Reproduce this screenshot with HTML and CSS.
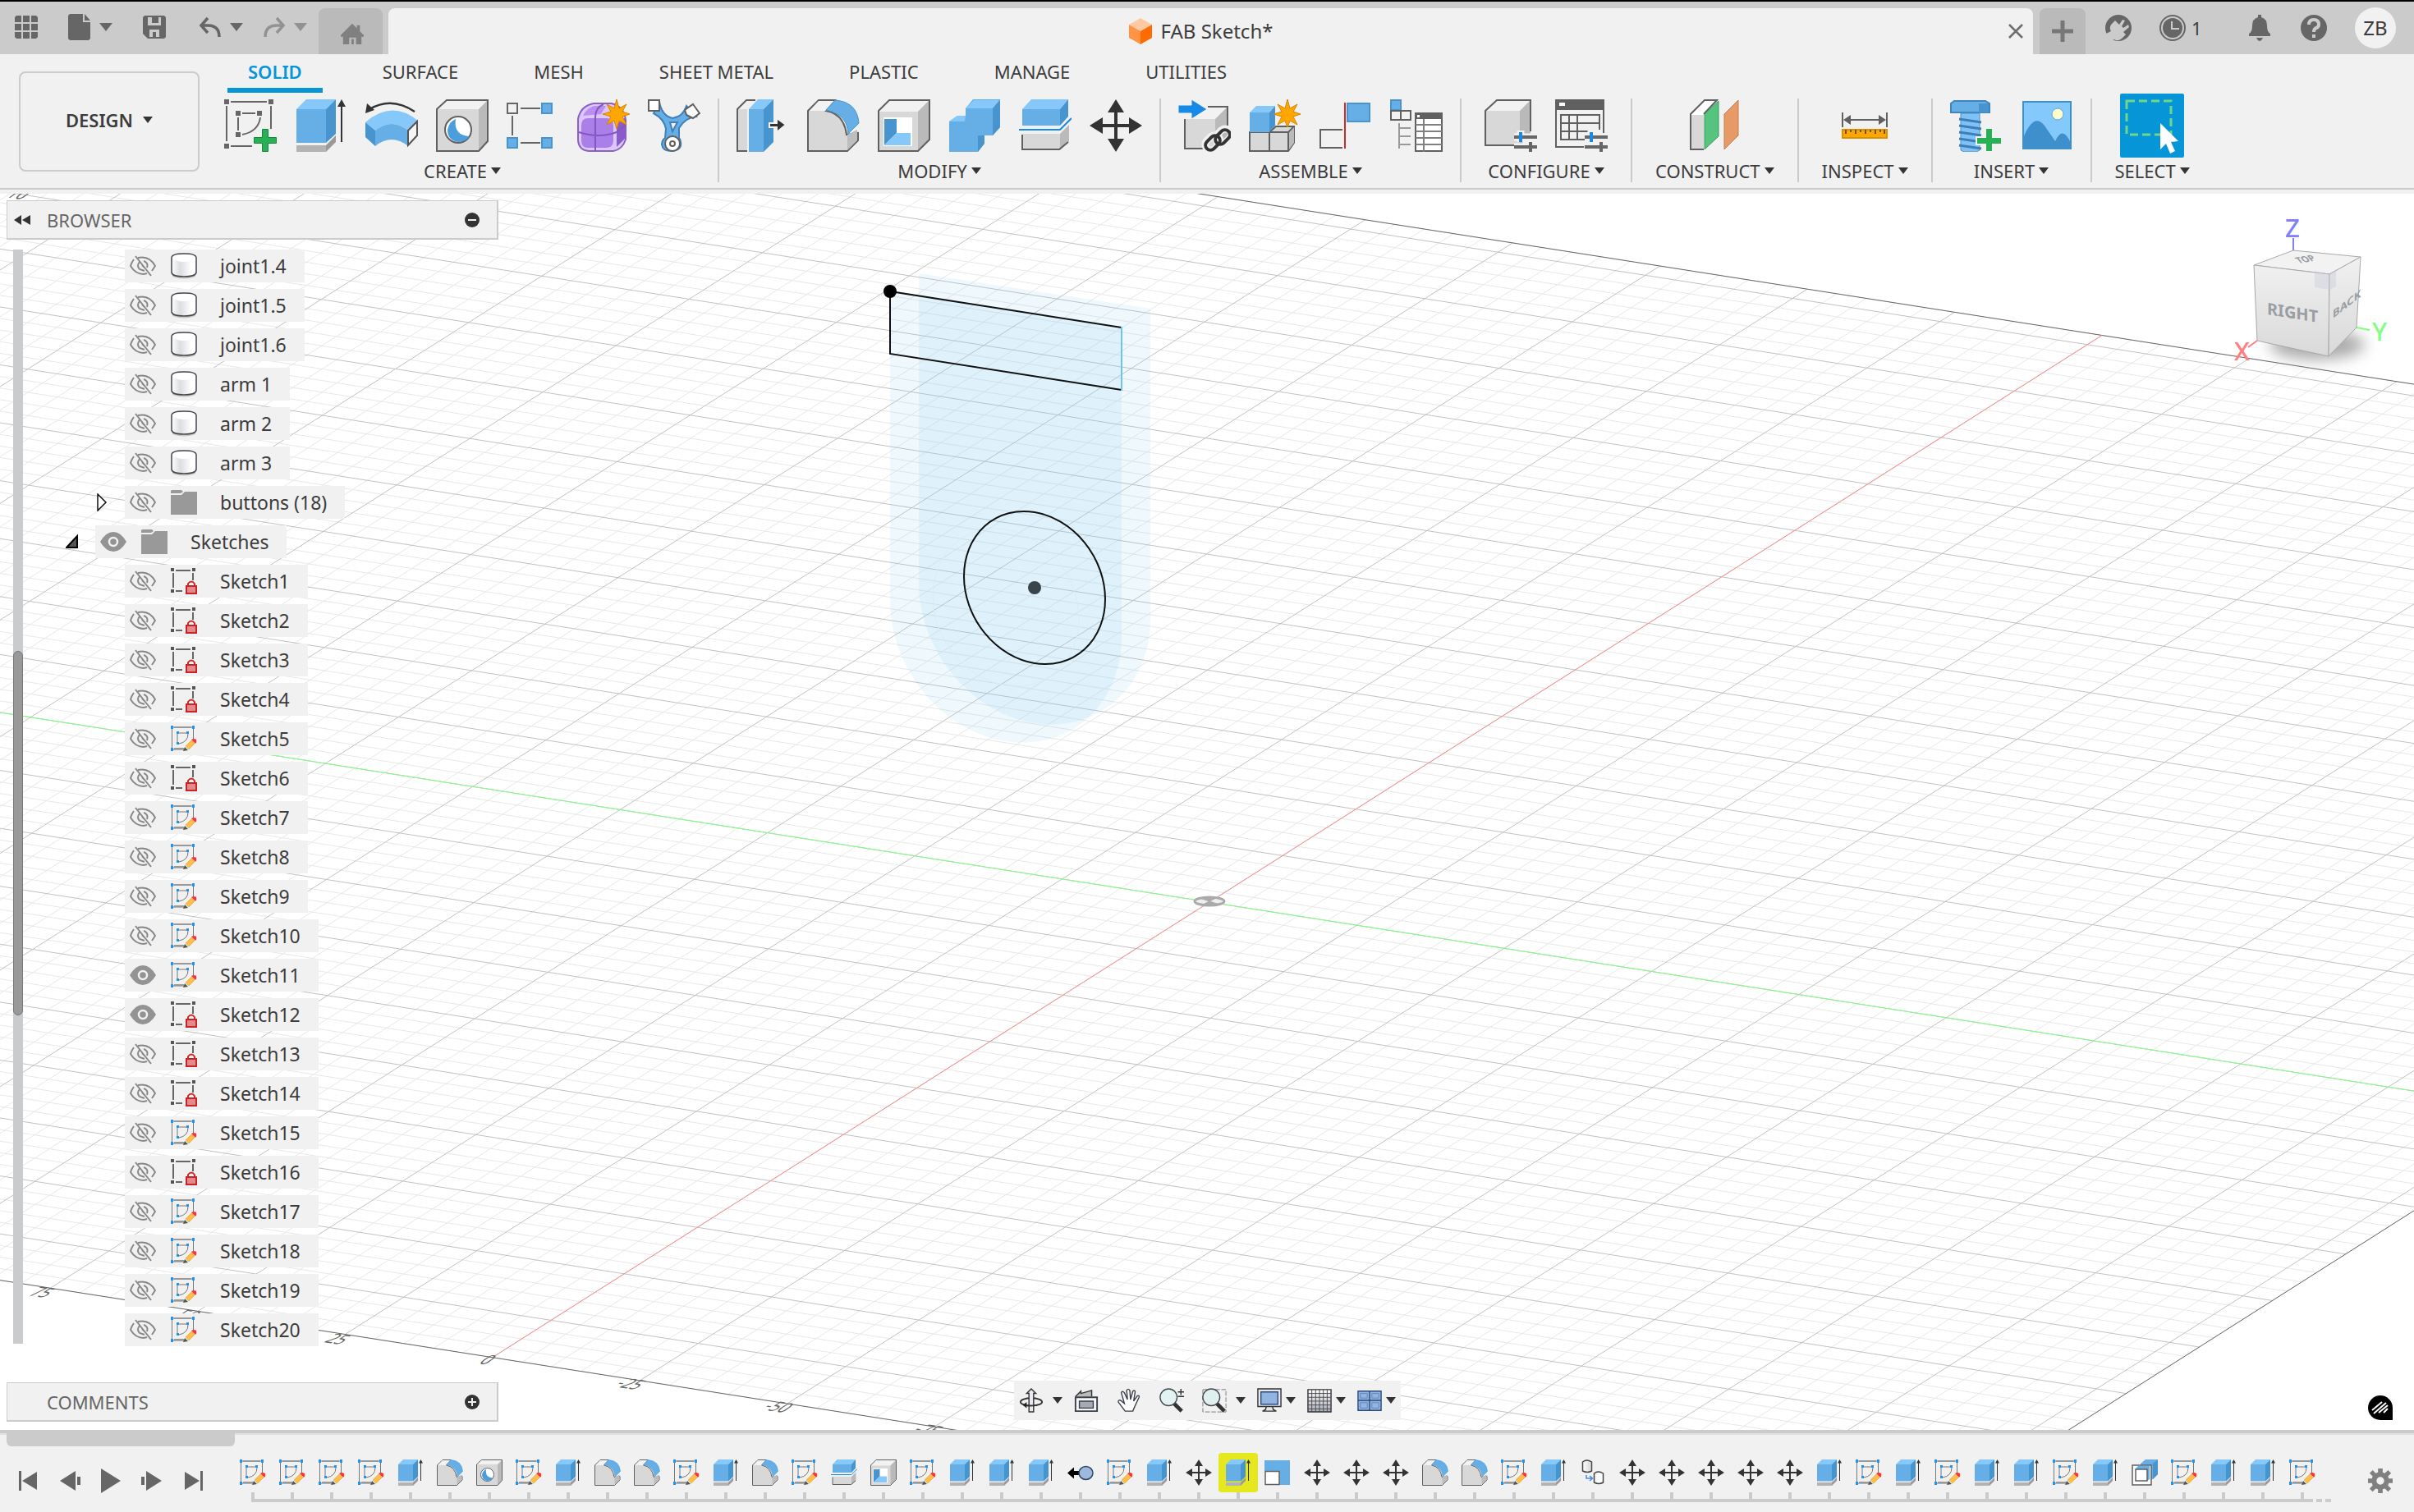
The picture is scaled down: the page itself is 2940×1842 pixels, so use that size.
FILE: index.html
```html
<!DOCTYPE html>
<html lang="en">
  <head>
    <meta charset="utf-8">
    <title>FAB Sketch*</title>
    <link rel="stylesheet" href="styles.css">
  </head>
  <body>
    <svg class="sprite" aria-hidden="true">
      <defs>
        <linearGradient id="cyl" x1="0" x2="1" y1="0" y2="0">
          <stop offset="0" stop-color="#fff" /><stop offset=".35" stop-color="#dcdde0" /><stop offset=".8" stop-color="#fff" />
        </linearGradient>
        <linearGradient id="steel" x1="0" x2="0" y1="0" y2="1">
          <stop offset="0" stop-color="#fff" /><stop offset="1" stop-color="#a9adbb" />
        </linearGradient>
        <linearGradient id="cubeSide" x1="0" x2="0" y1="0" y2="1">
          <stop offset="0" stop-color="#f0f0f0" /><stop offset="1" stop-color="#d9d9d9" />
        </linearGradient>
        <filter id="soft" x="-50%" y="-50%" width="200%" height="200%"><feGaussianBlur stdDeviation="9" /></filter>
      </defs>

      <!-- title bar -->
      <symbol id="apps" viewBox="0 0 28 28"><path fill="#666" d="M2 0h6v8H0V2zM10 0h8v8h-8zM20 0h6l2 2v6h-8zM0 10h8v8H0zM10 10h8v8h-8zM20 10h8v8h-8zM0 20h8v8H2l-2-2zM10 20h8v8h-8zM20 20h8v6l-2 2h-6z" /></symbol>
      <symbol id="file" viewBox="0 0 28 32"><path fill="#666" d="M2 0h16v10h9v20l-2 2H2l-2-2V2zM20 0l7 8h-7z" /></symbol>
      <symbol id="save" viewBox="0 0 28 28"><path fill="#666" fill-rule="evenodd" d="M2 0h24l2 2v24l-2 2H6l-6-6V2zM6 2v10h16V2h-3v7h-8V2zM8 17v9h4v-6h4v6h4v-9z" /></symbol>
      <symbol id="undo" viewBox="0 0 28 26"><path fill="none" stroke="#666" stroke-width="3.5" d="M11 2L3 11l8 9M3 11h8q14 0 14 14" /></symbol>
      <symbol id="redo" viewBox="0 0 28 26"><path fill="none" stroke="#929292" stroke-width="3.5" d="M17 2l8 9-8 9M25 11h-8Q3 11 3 25" /></symbol>
      <symbol id="home" viewBox="0 0 30 28"><path fill="#808080" fill-rule="evenodd" d="M15 1l6 6V3h4v8l5 5v2h-3v10h-7v-9h-9v9H3V18H0v-2zM14 21h3v7h-3z" /></symbol>
      <symbol id="doc" viewBox="0 0 28 32"><path fill="#ffc9a3" d="M14 0l14 8-14 8L0 8z" /><path fill="#ff9445" d="M0 8l14 8v16L0 24z" /><path fill="#ff6b00" d="M28 8l-14 8v16l14-8z" /></symbol>
      <symbol id="close" viewBox="0 0 18 18"><path stroke="#6e6e6e" stroke-width="2.500" d="M1 1l16 16M17 1L1 17" /></symbol>
      <symbol id="plus" viewBox="0 0 26 26"><path stroke="#777" stroke-width="5" d="M13 0v26M0 13h26" /></symbol>
      <symbol id="plug" viewBox="0 0 32 32">
        <circle cx="16" cy="16" r="16" fill="#666" />
        <path fill="#cbcbcb" d="M1 23l6-3q-3-5 1-9l4-4 5 5 4-6 3 1-4 7 2 2 6-4 1 3-7 6 3 3-5 5q-5 4-9 1l-7 3z" />
      </symbol>
      <symbol id="clock" viewBox="0 0 32 32"><circle cx="16" cy="16" r="15" fill="none" stroke="#666" stroke-width="2" /><circle cx="16" cy="16" r="12" fill="#666" /><path d="M15 8v9h9" fill="none" stroke="#ccc" stroke-width="2" /></symbol>
      <symbol id="bell" viewBox="0 0 32 32"><path fill="#666" d="M14 0h4v3q7 2 7 10 0 8 4 10v3H3v-3q4-2 4-10 0-8 7-10zM12 28h8q-4 8-8 0z" /></symbol>
      <symbol id="help" viewBox="0 0 32 32"><circle cx="16" cy="16" r="16" fill="#666" /><path fill="none" stroke="#ccc" stroke-width="4" d="M10 12q0-6 6-6t6 6q0 3-3 4-3 1-3 5M16 24v4" /></symbol>

      <!-- create -->
      <symbol id="sketch-new" viewBox="0 0 64 64">
        <path fill="#666" d="M0 0h6v6H0zM54 0h6v6h-6zM0 54h6v6H0zM14 14h6v6h-6zM40 14h6v6h-6zM14 40h6v6h-6z" />
        <path fill="none" stroke="#666" stroke-width="2" d="M8 3h44M3 8v43M57 8v28M8 57h26M22 17h16M17 22v16M44 22q-2 17-22 21" />
        <path fill="#28b057" stroke="#128a3b" d="M46.500 36.500h7v10h10v7h-10v10h-7v-10h-10v-7h10z" />
      </symbol>
      <symbol id="extrude" viewBox="0 0 64 64">
        <path fill="#b3b3b3" d="M2 56h36v8H2z" /><path fill="#999" d="M38 56l12-12v8L38 64z" />
        <path fill="#66afe6" d="M2 12h36v41H2z" /><path fill="#87c8fb" d="M2 12L14 0h36L38 12z" /><path fill="#4794ce" d="M38 12L50 0v42L38 53z" />
        <path fill="#333" d="M57 0l5 9h-4v43h-2V9h-4z" />
      </symbol>
      <symbol id="revolve" viewBox="0 0 64 64">
        <path fill="#87c8fb" d="M0 28q32-28 64-2L52 38q-20-16-40 0z" /><path fill="#66afe6" d="M12 38q20-16 40 0v19q-20-16-40 0z" /><path fill="#4794ce" d="M0 28l12 10v19L0 46z" />
        <path fill="#f5f5f5" stroke="#555" stroke-width="2" d="M52 38l11-11v17L52 56z" />
        <path fill="none" stroke="#333" stroke-width="2.500" d="M5 12Q32-4 60 15" /><path fill="#333" d="M0 17L2 5l9 8z" />
      </symbol>
      <symbol id="hole" viewBox="0 0 64 64">
        <path fill="#d8d8d8" d="M1 12h51v51H1z" /><path fill="#f2f2f2" d="M1 12L13 1h50L52 12z" /><path fill="#bababa" d="M52 12L63 1v50L52 63z" />
        <path fill="none" stroke="#606060" stroke-width="2" d="M1 12L13 1h50v50L52 63H1z" />
        <circle cx="27" cy="37" r="16" fill="#fff" stroke="#606060" stroke-width="2" /><path fill="#4a9edc" d="M24 24q-3 20 17 21-5 7-14 7-13-2-13-15 2-10 10-13z" />
      </symbol>
      <symbol id="pattern" viewBox="0 0 64 64">
        <path fill="none" stroke="#666" stroke-width="2" d="M17 11h24M7 20v24M17 53h24M1 5h12v12H1z" />
        <path fill="#66afe6" stroke="#4794ce" stroke-width="2" d="M43 5h12v12H43zM1 47h12v12H1zM43 47h12v12H43z" />
      </symbol>
      <symbol id="form" viewBox="0 0 64 64">
        <path fill="#dcc7fa" stroke="#8b61c4" stroke-width="2" d="M1 24Q4 8 20 5h22q15 4 17 20v24Q55 61 44 63H14Q2 62 1 50z" />
        <path fill="#ab7fe8" d="M5 32q0-9 8-9h22q9 0 9 9v18q0 9-9 9H13q-8 0-8-9z" /><path fill="#8a5bca" d="M48 30l11-8v25L48 58z" /><path fill="#bb8ef2" d="M7 20q5-10 14-12h14l-6 10z" />
        <path fill="none" stroke="#8456be" stroke-width="2" d="M22 63V22q0-12 10-16M2 40q25 8 46 0l11-9" />
        <path fill="#ffa700" stroke="#d98500" d="M48 0l3 11 9-5-5 9 9 3-9 3 5 10-9-5-3 10-3-10-9 5 5-10-10-3 10-3-5-9 9 5z" />
      </symbol>
      <symbol id="derive" viewBox="0 0 64 64">
        <path fill="#66afe6" stroke="#4180b8" stroke-width="2" fill-rule="evenodd" d="M14 3q3 17 16 20 13-2 17-15l12 13q-13 1-21 14v12q3 3 2 10-2 6-12 6t-11-8q0-5 4-8l1-11Q20 24 7 17zM27 28l3 11 6-11z" />
        <path fill="#fff" stroke="#606060" stroke-width="2" d="M1 1h13v13H1zM55 6l8 11-8 6-8-4-2-6z" /><circle cx="30" cy="54" r="9" fill="#fff" stroke="#606060" stroke-width="2" /><circle cx="30" cy="54" r="3" fill="none" stroke="#606060" stroke-width="2" />
      </symbol>

      <!-- modify -->
      <symbol id="press" viewBox="0 0 64 64">
        <path fill="#d8d8d8" d="M1 12h12v51H1z" /><path fill="none" stroke="#606060" stroke-width="2" d="M23 1H12L1 12v51h12" />
        <path fill="#66afe6" d="M15 12h18v52H15z" /><path fill="#87c8fb" d="M15 12L26 0h19L33 12z" /><path fill="#4794ce" d="M33 12L45 0v52L33 64z" />
        <path fill="#333" stroke="#f1f1f1" stroke-width="2" d="M40 29h9v-6l11 8-11 9v-6h-9z" />
      </symbol>
      <symbol id="fillet" viewBox="0 0 64 64">
        <path fill="#d8d8d8" stroke="#606060" stroke-width="2" d="M1 14L14 1h20L23 14q22 4 25 29l14-2v9L49 63H1z" />
        <path fill="#f2f2f2" d="M3 14L14 2h19L22 14z" /><path fill="#bdbdbd" d="M49 43l12-6v13L49 62z" />
        <path fill="#66afe6" stroke="#4794ce" d="M23 13L34 1q27 2 29 28L50 42Q49 18 23 13z" />
      </symbol>
      <symbol id="shell" viewBox="0 0 64 64">
        <path fill="#d8d8d8" d="M1 14L14 1h49v48L49 63H1z" /><path fill="#f2f2f2" d="M1 15L14 1h49L49 15z" /><path fill="#bababa" d="M49 15L63 1v48L49 63z" />
        <path fill="none" stroke="#606060" stroke-width="2" d="M1 14L14 1h49v48L49 63H1z" /><path fill="#fff" d="M7 22h35v35H7z" /><path fill="#4794ce" d="M8 24h15v17L8 56z" /><path fill="#87c8fb" d="M23 41h17v15H8z" />
      </symbol>
      <symbol id="combine" viewBox="0 0 64 64">
        <path fill="#66afe6" d="M1 27l10-7h10V11L30 0h33v34l-9 10H43v10L36 64H1z" /><path fill="#87c8fb" d="M21 11L31 1h31L54 11zM1 27l10-7h10l-1 7z" /><path fill="#4794ce" d="M54 11l9-10v33l-9 10zM36 64V44h8v10z" />
      </symbol>
      <symbol id="split" viewBox="0 0 64 64">
        <path fill="#d8d8d8" d="M4 42h46v20H4z" /><path fill="#bababa" d="M50 42l11-11v20L50 62z" /><path fill="none" stroke="#606060" stroke-width="2" d="M4 43v18h45l11-9" />
        <path fill="#66afe6" d="M4 12h46v20H4z" /><path fill="#87c8fb" d="M4 12L15 0h45L50 12z" /><path fill="#4794ce" d="M50 12L60 0v21L50 32z" /><path fill="none" stroke="#1789e6" stroke-width="2" d="M0 37h50l14-14" />
      </symbol>
      <symbol id="move" viewBox="0 0 64 64"><path fill="#333" d="M32 0l10 16h-8v14h14v-8l16 10-16 10v-8H34v14h8L32 64 22 48h8V34H16v8L0 32l16-10v8h14V16h-8z" /></symbol>

      <!-- assemble -->
      <symbol id="insert-link" viewBox="0 0 64 64">
        <path fill="#d8d8d8" d="M8 24h37v36H8z" /><path fill="#f2f2f2" d="M8 24L24 9h36L45 24z" /><path fill="#bababa" d="M45 24L60 9v36L45 60z" /><path fill="none" stroke="#606060" stroke-width="2" d="M8 24v36h30M36 9h24v34" />
        <path fill="#1789e6" stroke="#f1f1f1" d="M0 7h16V0l19 12-19 12v-7H0z" />
        <g fill="none" stroke="#f1f1f1" stroke-width="9"><rect x="-7" y="-10" width="14" height="20" rx="7" transform="translate(42 53) rotate(45)" /><rect x="-7" y="-10" width="14" height="20" rx="7" transform="translate(55 45) rotate(45)" /></g>
        <g fill="none" stroke="#333" stroke-width="4"><rect x="-6" y="-10" width="12" height="20" rx="6" transform="translate(42 53) rotate(45)" /><rect x="-6" y="-10" width="12" height="20" rx="6" transform="translate(54 46) rotate(45)" /></g>
      </symbol>
      <symbol id="component" viewBox="0 0 64 64">
        <path fill="#d8d8d8" stroke="#606060" stroke-width="2" d="M1 40h24l8-7h22v20L48 63H1zM25 40v23M25 40h23v23M48 40l7-7" /><path fill="#bababa" d="M49 41l6-7v19l-6 8z" />
        <path fill="#66afe6" d="M1 16h24v24H1z" /><path fill="#87c8fb" d="M1 16l8-8h23l-7 8z" /><path fill="#4794ce" d="M25 16l7-8v24l-7 8z" />
        <path fill="#ffa700" stroke="#d98500" d="M47 0l3 11 9-5-5 9 9 3-9 3 5 10-9-5-3 8-3-8-9 5 5-10-10-3 10-3-5-9 9 5z" />
      </symbol>
      <symbol id="joint" viewBox="0 0 64 64"><path fill="none" stroke="#606060" stroke-width="2" d="M28 37H1v22h27" /><path stroke="#c92a2a" stroke-width="2" d="M31 4v56" /><path fill="#66afe6" stroke="#4794ce" stroke-width="2" d="M34 5h27v22H34z" /></symbol>
      <symbol id="parts" viewBox="0 0 64 64">
        <path fill="#66afe6" stroke="#4794ce" stroke-width="2" d="M1 1h12v12H1z" /><path fill="none" stroke="#606060" stroke-width="2" d="M1 14h24v11H1zM13 14v11" /><path fill="none" stroke="#999" stroke-width="2" d="M11 29v31M11 35h14M11 45h14M11 55h14" />
        <path fill="#fff" stroke="#606060" stroke-width="2" d="M31 17h32v46H31z" /><path fill="#606060" d="M31 16h32v8H31z" /><path stroke="#808080" stroke-width="2" d="M31 31h32M31 39h32M31 47h32M31 55h32M41 24v40" /><path fill="#fff" d="M33 19h3v3h-3z" />
      </symbol>

      <!-- configure, construct, inspect, insert, select -->
      <symbol id="config" viewBox="0 0 64 64">
        <path fill="#d8d8d8" d="M1 14h42v42H1z" /><path fill="#f2f2f2" d="M1 14L15 1h41L43 14z" /><path fill="#bababa" d="M43 14L56 1v42L43 56z" /><path fill="none" stroke="#606060" stroke-width="2" d="M36 56H1V14L15 1h41v38" />
        <path stroke="#f1f1f1" stroke-width="9" d="M36 46h28M36 58h28M44 38v14" /><path stroke="#666" stroke-width="4" d="M36 46h28M36 58h28M56 52v12" /><path stroke="#1789e6" stroke-width="4" d="M44 40v12" />
      </symbol>
      <symbol id="config-table" viewBox="0 0 64 64">
        <path fill="none" stroke="#606060" stroke-width="2" d="M1 1h58v40M1 1v57h34" /><path fill="#606060" d="M0 0h60v13H0z" /><path fill="#fff" d="M5 4h7v4H5z" /><path fill="none" stroke="#606060" stroke-width="2" d="M38 49H7V19h47v18M7 29h47M7 39h40M17 19v30M27 19v30" />
        <path stroke="#f1f1f1" stroke-width="9" d="M36 46h28M36 58h28M44 38v14" /><path stroke="#666" stroke-width="4" d="M36 46h28M36 58h28M56 52v12" /><path stroke="#1789e6" stroke-width="4" d="M44 40v12" />
      </symbol>
      <symbol id="plane" viewBox="0 0 64 64">
        <path fill="#fff" stroke="#606060" stroke-width="2" d="M19 61H3V18L20 1h15L19 18" /><path fill="#d8d8d8" d="M4 19h15v41H4z" />
        <path fill="#56c47e" stroke="#3a9d5e" d="M20 18L37 2v43L20 61z" /><path fill="#e79a66" stroke="#c87c48" d="M44 18L61 1v43L44 61z" />
      </symbol>
      <symbol id="measure" viewBox="0 0 64 64"><path stroke="#606060" stroke-width="2" d="M5 16v18M59 16v18M10 25h44" /><path fill="#606060" d="M6 25l9-6v12zM58 25l-9-6v12z" /><path fill="#ffa700" stroke="#dc9000" stroke-width="2" d="M5 37h54v10H5z" /><path stroke="#705000" stroke-width="2" d="M9 37v5M15 37v3M21 37v5M27 37v3M33 37v5M39 37v3M45 37v5M51 37v3M56 37v5" /></symbol>
      <symbol id="bolt" viewBox="0 0 64 64">
        <path fill="#66afe6" stroke="#3f86bf" stroke-width="2" d="M1 5l4-3h38l5 3v11H1z" /><path fill="#4794ce" d="M35 5h12v11H35z" /><path fill="#7fc2f7" stroke="#4a90c9" d="M13 17h23v45l-4 2H17l-4-2z" /><path stroke="#3f7fb5" stroke-width="3" d="M11 24l27 4M11 32l27 4M11 40l27 4M11 48l27 4M11 56l27 4" />
        <path fill="#28b057" stroke="#f1f1f1" stroke-width="2" d="M43 35h9v11h11v9H52v9h-9v-9H32v-9h11z" />
      </symbol>
      <symbol id="image" viewBox="0 0 64 64"><path fill="#84c9fb" stroke="#3e90cc" stroke-width="2" d="M3 3h58v57H3z" /><path fill="#3e90cc" d="M3 47q14-34 28-12l11 16q9-20 19 2v7H3z" /><circle cx="45" cy="18" r="7" fill="#fdfdce" stroke="#5fa5d8" /></symbol>
      <symbol id="select" viewBox="0 0 78 78"><path fill="none" stroke="#6fd68a" stroke-width="3" stroke-dasharray="10 5" d="M8 9h54v41H8z" /><path fill="#fff" d="M49 36l22 22-9 1 5 11-6 3-5-12-7 7z" /></symbol>

      <!-- tree -->
      <symbol id="eye-off" viewBox="0 0 32 26"><path fill="none" stroke="#888" stroke-width="2" d="M5 5Q2 9 1 13q6 10 16 10l4-1M10 3q14-3 21 10l-4 6M12 8q-4 5 0 9l6 2M17 7q6 2 4 8M15 12l3 3M7 1l19 24" /></symbol>
      <symbol id="eye" viewBox="0 0 32 26"><path fill="#939393" d="M0 13Q7 1 16 1t16 12q-7 12-16 12T0 13z" /><circle cx="16" cy="13" r="5" fill="#939393" stroke="#f1f1f1" stroke-width="2.500" /></symbol>
      <symbol id="body" viewBox="0 0 32 32"><path fill="#888" opacity=".4" d="M2 26q14 8 28 0v3q-14 5-28 0z" /><path fill="url(#cyl)" stroke="#44474d" stroke-width="1.500" d="M1 6q0-5 15-5t15 5v18q-1 5-15 5T1 24z" /><path fill="#fff" d="M2 6q2-4 14-4t14 4q-4 5-14 5T2 6z" /></symbol>
      <symbol id="folder" viewBox="0 0 32 32"><path fill="#999" d="M0 2l1-1h12l2 2-3 2H0zM0 7h13l4-4h15v28H0z" /></symbol>
      <symbol id="sk-lock" viewBox="0 0 32 32">
        <path fill="#555" d="M0 0h4v4H0zM26 0h4v4h-4zM0 26h4v4H0z" /><path stroke="#666" stroke-width="2" d="M6 3h18M3 6v18M27 6v9M6 28h8" />
        <path fill="none" stroke="#d12a2a" stroke-width="2" d="M21 23v-4q4-5 8 0v4" /><path fill="#e38a8a" stroke="#c92323" stroke-width="2" d="M19 22h12v9H19z" />
      </symbol>
      <symbol id="sk-edit" viewBox="0 0 32 32">
        <path fill="none" stroke="#777" d="M1.500 2h26v16M1.500 2v27h15M8 9h12M8 9v13M21 10q0 10-11 12" />
        <path fill="none" stroke="#999" stroke-width="2" d="M4 2h21M4 28h12" />
        <path fill="#1e96f0" d="M0 0h3v4H0zM26 0h3v4h-3zM0 27h3v4H0zM7 7h3v3H7zM19 7h3v3h-3zM7 20h3v3H7z" />
        <path fill="#ffbf47" stroke="#d99a25" stroke-width=".5" d="M25 18l4 4-7 7-4-4z" /><path fill="#f33" d="M25 17q3-2 6 0 1 3-1 5z" /><path fill="#555" d="M17 26l4 4-6 1z" />
      </symbol>

      <!-- navigation bar -->
      <symbol id="orbit" viewBox="0 0 32 32"><ellipse cx="16" cy="18" rx="14" ry="5" fill="none" stroke="#333" stroke-width="2" /><path fill="#e8eaee" stroke="#333" stroke-width="1.500" d="M16 1l6 6h-3v24h-6V7h-3z" /><path fill="none" stroke="#333" stroke-width="2" d="M6 22q9 2 18 0" /><path fill="#222" d="M5 22l5-4v8z" /></symbol>
      <symbol id="lookat" viewBox="0 0 32 32"><path fill="#bbb" stroke="#333" stroke-width="1.500" d="M2 11l7-7v3l14-4v8" /><path fill="#f6f6f8" stroke="#3a3f4a" stroke-width="2" d="M2 12h28v18H2z" /><path fill="#a5abb5" stroke="#3a3f4a" stroke-width="1.500" d="M7 17h18v9H7z" /></symbol>
      <symbol id="hand" viewBox="0 0 32 32"><path fill="#fdfdfd" stroke="#3a3f4a" stroke-width="1.500" d="M11 30L2 18q0-3 3-2l5 4L6 6q1-3 4 0l4 9-1-12q2-3 4 0l1 12 3-11q3-2 3 1l-2 12 5-7q3-1 2 2l-6 13-2 5z" /></symbol>
      <symbol id="zoomer" viewBox="0 0 32 32"><path stroke="#333" stroke-width="5" d="M19 20l10 10" /><circle cx="12" cy="12" r="11" fill="#e3f3f3" stroke="#444a50" stroke-width="1.500" /><path stroke="#333" stroke-width="1.500" d="M24 5h8M28 1v8M24 11h8" /></symbol>
      <symbol id="fit" viewBox="0 0 32 32"><path fill="none" stroke="#777" stroke-dasharray="6 2" d="M1 2h30v29H1z" /><path stroke="#333" stroke-width="5" d="M19 20l10 10" /><circle cx="12" cy="12" r="11" fill="#dff0ef" stroke="#444a50" stroke-width="1.500" /></symbol>
      <symbol id="display" viewBox="0 0 32 32"><path fill="#e8e8ea" stroke="#333" stroke-width="1.500" d="M1 1h30v23H1zM12 24h8l1 4 4 2H7l4-2z" /><path fill="#92b4e0" stroke="#2c4a80" stroke-width="1.500" d="M5 5h22v16H5z" /></symbol>
      <symbol id="grid" viewBox="0 0 32 32"><path fill="url(#steel)" stroke="#333" stroke-width="1.500" d="M1 2h30v29H1z" /><path stroke="#4a4a4a" d="M6 2v29M11 2v29M16 2v29M21 2v29M26 2v29M1 7h30M1 12h30M1 17h30M1 22h30M1 27h30" /></symbol>
      <symbol id="views" viewBox="0 0 32 32"><path fill="#92b4e0" stroke="#2c4a80" stroke-width="1.500" d="M1 4h30v25H1zM16 4v25M1 16h30" /><path fill="none" stroke="#6486b8" d="M4 7h9v6H4zM19 7h9v6h-9zM4 19h9v7H4zM19 19h9v7h-9z" /></symbol>

      <!-- timeline -->
      <symbol id="capture" viewBox="0 0 64 64"><path fill="#000" d="M0 33l16-14v9h16v10H16v9z" /><ellipse cx="45" cy="33" rx="17" ry="16" fill="#9fb9dd" stroke="#2f456b" stroke-width="3" /></symbol>
      <symbol id="scale" viewBox="0 0 64 64"><path fill="#66afe6" d="M0 2h62v60H34V28H0z" /><path fill="#fff" stroke="#606060" stroke-width="3" d="M2 29h34v32H2z" /></symbol>
      <symbol id="rigid" viewBox="0 0 64 64"><path fill="url(#cyl)" stroke="#444" stroke-width="3" d="M7 6q10-8 22 0v22q-10 6-22 0zM35 34q10-8 22 0v22q-10 6-22 0z" /><path fill="none" stroke="#4a8be0" stroke-width="3" d="M16 38v8h14M24 40l7 6-7 6" /></symbol>
      <symbol id="boundary" viewBox="0 0 64 64"><path fill="#66afe6" d="M22 10L34 0h30v36L52 48H22z" /><path fill="#4794ce" d="M52 10L64 0v36L52 48z" /><path fill="#fff" stroke="#606060" stroke-width="3" d="M2 14h46v48H2z" /><path fill="#66afe6" d="M10 22l6-6h28v32l-6 4z" /><path fill="#fff" stroke="#606060" stroke-width="3" d="M10 24h28v28H10z" /></symbol>
      <symbol id="first" viewBox="0 0 30 30"><path fill="#666" d="M3 3h3v24H3zM25 4v22L7 15z" /></symbol>
      <symbol id="back" viewBox="0 0 30 30"><path fill="#666" d="M22 3v24L3 15zM24 10h4v10h-4z" /></symbol>
      <symbol id="play" viewBox="0 0 30 30"><path fill="#666" d="M3 0l24 15L3 30z" /></symbol>
      <symbol id="forward" viewBox="0 0 30 30"><path fill="#666" d="M8 3v24l19-12zM2 10h4v10H2z" /></symbol>
      <symbol id="last" viewBox="0 0 30 30"><path fill="#666" d="M24 3h3v24h-3zM5 4v22l18-11z" /></symbol>
      <symbol id="gear" viewBox="0 0 32 32"><path fill="#808080" fill-rule="evenodd" d="M13 0h6v5l3 1 4-4 4 4-4 4 1 3h5v6h-5l-1 3 4 4-4 4-4-4-3 1v5h-6v-5l-3-1-4 4-4-4 4-4-1-3H0v-6h5l1-3-4-4 4-4 4 4 3-1zM16 11a5 5 0 1 0 0 10 5 5 0 0 0 0-10z" /></symbol>
    </svg>

    <header class="titlebar">
      <div class="quick">
        <button class="bare" aria-label="Data panel"><svg class="i28"><use href="#apps" /></svg></button>
        <button class="bare drop" aria-label="File"><svg class="i28 tall"><use href="#file" /></svg><i class="caret grey"></i></button>
        <button class="bare" aria-label="Save"><svg class="i28"><use href="#save" /></svg></button>
        <div class="history">
          <button class="bare drop" aria-label="Undo"><svg class="i28"><use href="#undo" /></svg><i class="caret grey"></i></button>
          <button class="bare drop" aria-label="Redo"><svg class="i28"><use href="#redo" /></svg><i class="caret light"></i></button>
        </div>
      </div>
      <button class="home-tab" aria-label="Home"><svg class="i28"><use href="#home" /></svg></button>
      <div class="doc-tab">
        <h1 class="doc-name"><svg class="i28 tall"><use href="#doc" /></svg>FAB Sketch*</h1>
        <button class="bare" aria-label="Close"><svg class="i18"><use href="#close" /></svg></button>
      </div>
      <button class="new-tab" aria-label="New design"><svg class="i26"><use href="#plus" /></svg></button>
      <div class="account">
        <button class="bare" aria-label="Extensions"><svg class="i32"><use href="#plug" /></svg></button>
        <button class="bare jobs"><svg class="i32"><use href="#clock" /></svg>1</button>
        <button class="bare" aria-label="Notifications"><svg class="i32"><use href="#bell" /></svg></button>
        <button class="bare" aria-label="Help"><svg class="i32"><use href="#help" /></svg></button>
        <button class="avatar">ZB</button>
      </div>
    </header>

    <section class="ribbon">
      <button class="workspace">DESIGN<i class="caret"></i></button>
      <div class="ribbon-main">
        <nav class="tabs">
          <a href="#" class="tab active">SOLID</a>
          <a href="#" class="tab">SURFACE</a>
          <a href="#" class="tab">MESH</a>
          <a href="#" class="tab">SHEET METAL</a>
          <a href="#" class="tab">PLASTIC</a>
          <a href="#" class="tab">MANAGE</a>
          <a href="#" class="tab">UTILITIES</a>
        </nav>
        <div class="groups" id="groups"></div>
      </div>
    </section>

    <main class="viewport">
      <svg class="scene" viewBox="0 236 2940 1506" preserveAspectRatio="xMidYMid slice">
        <path id="minor" class="minor" />
        <path id="major" class="major" />
        <path id="edge" class="edge" />
        <path id="xaxis" class="xaxis" />
        <path id="yaxis" class="yaxis" />
        <g class="ticks">
          <text transform="translate(34 1578) rotate(9) skewX(-45)">75</text>
          <text transform="translate(212 1606) rotate(9) skewX(-45)">50</text>
          <text transform="translate(394 1635) rotate(9) skewX(-45)">25</text>
          <text transform="translate(582 1661) rotate(9) skewX(-45)">0</text>
          <text transform="translate(748 1689) rotate(9) skewX(-45)">-25</text>
          <text transform="translate(928 1717) rotate(9) skewX(-45)">-50</text>
          <text transform="translate(1110 1745) rotate(9) skewX(-45)">-75</text>
          <text transform="translate(6 240) rotate(9) skewX(-45)">10</text>
        </g>
        <g class="origin">
          <ellipse cx="1473" cy="1098" rx="18" ry="5" />
          <path d="M1473 1098l-12-4q12-3 20 0zM1473 1098l12 4q-12 3-20 0z" />
        </g>
        <path class="profile" d="M1084 355L1366 399V776C1366 858 1303 915 1225 903C1147 891 1084 814 1084 732Z" />
        <path class="profile" d="M1119 333L1401 376V754C1401 836 1338 893 1260 881C1182 869 1119 792 1119 710Z" />
        <circle class="ghost" r="1" transform="matrix(89 14 0 95 1225 740)" />
        <path class="curve" d="M1366 399L1084 355V431L1366 475" />
        <path class="picked" d="M1366 398V476" />
        <circle class="curve" r="1" transform="matrix(86 14 0 92 1260 716)" />
        <circle cx="1084" cy="355" r="8" />
        <circle cx="1260" cy="716" r="8" fill="#3a454b" />

        <g class="cube">
          <ellipse cx="2822" cy="420" rx="58" ry="18" fill="#aaa" filter="url(#soft)" />
          <path d="M2793 305V290" stroke="#8080ff" stroke-width="2" />
          <path d="M2870 399l16 3" stroke="#80ff80" stroke-width="2" />
          <path d="M2749 415l-11 8" stroke="#ff8080" stroke-width="2" />
          <path class="face" fill="#f2f2f2" d="M2745 323l48-18 82 8-38 21z" />
          <path class="face" fill="url(#cubeSide)" d="M2745 323l92 11-1 100-87-19z" />
          <path class="face" fill="url(#cubeSide)" d="M2837 334l38-21-5 86-34 35z" />
          <path fill="#c6cbd8" opacity=".4" d="M2819 330l18 4 8-6v21l-8 4-18-3z" />
          <text class="face-label" transform="translate(2761 383) skewY(9)">RIGHT</text>
          <text class="face-label back" transform="translate(2841 388) skewY(-38)">BACK</text>
          <text class="face-label small" transform="translate(2800 321) rotate(-10) skewX(30)">TOP</text>
          <text class="axis" x="2783" y="289" fill="#8080ff">Z</text>
          <text class="axis" x="2721" y="439" fill="#ff8080">X</text>
          <text class="axis" x="2889" y="415" fill="#80ff80">Y</text>
        </g>
      </svg>

      <aside class="browser">
        <header class="panel">
          <svg class="rewind" viewBox="0 0 20 12"><path fill="#333" d="M0 6l9-6v12zM10 6l10-6v12z" /></svg>
          <h2>BROWSER</h2>
          <button class="bare" aria-label="Collapse"><svg class="i18" viewBox="0 0 18 18"><circle cx="9" cy="9" r="9" fill="#333" /><path stroke="#f1f1f1" stroke-width="2" d="M4 9h10" /></svg></button>
        </header>
        <div class="tree-wrap">
          <div class="scroll"><div class="thumb"></div></div>
          <ul class="tree" id="tree"></ul>
        </div>
      </aside>

      <aside class="panel comments">
        <span class="rewind"></span>
        <h2>COMMENTS</h2>
        <button class="bare" aria-label="Expand"><svg class="i18" viewBox="0 0 18 18"><circle cx="9" cy="9" r="9" fill="#333" /><path stroke="#f1f1f1" stroke-width="2" d="M4 9h10M9 4v10" /></svg></button>
      </aside>

      <nav class="navbar">
        <button class="bare drop" aria-label="Orbit"><svg class="i30"><use href="#orbit" /></svg><i class="caret"></i></button>
        <button class="bare" aria-label="Look at"><svg class="i30"><use href="#lookat" /></svg></button>
        <button class="bare" aria-label="Pan"><svg class="i30"><use href="#hand" /></svg></button>
        <button class="bare" aria-label="Zoom"><svg class="i30"><use href="#zoomer" /></svg></button>
        <button class="bare drop" aria-label="Fit"><svg class="i30"><use href="#fit" /></svg><i class="caret"></i></button>
        <button class="bare drop tight" aria-label="Display settings"><svg class="i30"><use href="#display" /></svg><i class="caret"></i></button>
        <button class="bare drop tight" aria-label="Grid and snaps"><svg class="i30"><use href="#grid" /></svg><i class="caret"></i></button>
        <button class="bare drop tight" aria-label="Viewports"><svg class="i30"><use href="#views" /></svg><i class="caret"></i></button>
      </nav>

      <button class="bare assistant" aria-label="Assistant"><svg class="i30" viewBox="0 0 30 30"><path d="M15 0a15 15 0 0 1 15 15v15H15a15 15 0 0 1 0-30z" /><path stroke="#fff" stroke-width="2" d="M5 18L17 8M7 22L22 9M13 21l11-9M19 21l5-5" /></svg></button>
    </main>

    <footer class="dock">
      <div class="dock-thumb"></div>
      <div class="dock-row">
        <div class="playback">
          <button class="bare" aria-label="First"><svg class="i30"><use href="#first" /></svg></button>
          <button class="bare" aria-label="Previous"><svg class="i30"><use href="#back" /></svg></button>
          <button class="bare" aria-label="Play"><svg class="i30"><use href="#play" /></svg></button>
          <button class="bare" aria-label="Next"><svg class="i30"><use href="#forward" /></svg></button>
          <button class="bare" aria-label="Last"><svg class="i30"><use href="#last" /></svg></button>
        </div>
        <div class="timeline">
          <ol class="steps" id="steps"></ol>
          <div class="rail"><i></i><i></i><i></i></div>
        </div>
        <button class="bare settings" aria-label="Settings"><svg class="i30"><use href="#gear" /></svg></button>
      </div>
    </footer>
    <script src="script.js"></script>
  </body>
</html>
```
FILE: styles.css
```css
* {
  box-sizing: border-box;
}
body {
  margin: 0;
  height: 100vh;
  display: flex;
  flex-direction: column;
  border-top: 2px solid #000;
  background: #f1f1f1;
  color: #3c3c3c;
  font: 22px/30px "Noto Sans", "Open Sans", sans-serif;
  overflow: hidden;
}
h1,
h2,
ul,
ol {
  margin: 0;
  padding: 0;
  font-weight: 400;
  list-style: none;
}
svg {
  display: block;
  flex: none;
}
.sprite {
  position: absolute;
  width: 0;
  height: 0;
}
button {
  font: inherit;
  color: inherit;
  border: none;
  padding: 0;
  background: none;
}
.bare {
  display: flex;
  align-items: center;
}
.i18 {
  width: 18px;
  height: 18px;
}
.i26 {
  width: 26px;
  height: 26px;
}
.i28 {
  width: 28px;
  height: 28px;
}
.i30 {
  width: 30px;
  height: 30px;
}
.i32 {
  width: 32px;
  height: 32px;
}
.i64 {
  width: 64px;
  height: 64px;
}
.tall {
  height: 32px;
}
.caret {
  border: 6px solid transparent;
  border-top: 8px solid #333;
  border-bottom: 0;
}
.caret.grey,
.caret.light {
  border-width: 10px 8px 0;
  border-top-color: #666;
}
.caret.light {
  border-top-color: #929292;
}

/* title bar */
.titlebar {
  display: flex;
  height: 64px;
  padding-top: 8px;
  background: #cbcbcb;
}
.quick,
.history,
.account,
.drop {
  display: flex;
  align-items: center;
}
.quick {
  gap: 37px;
  padding: 0 14px 10px 18px;
}
.quick .drop {
  gap: 10px;
}
.history {
  gap: 24px;
  margin-left: 3px;
}
.home-tab,
.new-tab {
  display: flex;
  align-items: center;
  justify-content: center;
  background: #bababa;
  border-radius: 8px 8px 0 0;
}
.home-tab {
  width: 78px;
  padding: 6px 0 0 4px;
  margin-right: 7px;
}
.new-tab {
  width: 56px;
}
.doc-tab {
  flex: 1;
  display: flex;
  align-items: center;
  padding-right: 12px;
  margin-right: 8px;
  background: #f1f1f1;
  border-radius: 8px 8px 0 0;
}
.doc-name {
  flex: 1;
  display: flex;
  align-items: center;
  justify-content: center;
  gap: 11px;
  padding-left: 6px;
  font-size: 24px;
}
.account {
  gap: 34px;
  padding: 0 22px 8px 24px;
}
.jobs {
  width: 72px;
  gap: 7px;
}
.avatar {
  width: 50px;
  height: 50px;
  border-radius: 50%;
  background: #f1f1f1;
  font-size: 24px;
}

/* ribbon */
.ribbon {
  display: flex;
  height: 170px;
  border-bottom: 5px solid #f1f1f1;
  box-shadow: inset 0 -2px #cbcbcb;
}
.workspace {
  display: flex;
  align-items: center;
  justify-content: center;
  gap: 12px;
  width: 220px;
  height: 122px;
  margin: 21px 9px 0 23px;
  padding-bottom: 4px;
  border: 2px solid #cbcbcb;
  border-radius: 8px;
  font-weight: 600;
}
.tabs {
  display: flex;
  gap: 42px;
  padding-left: 25px;
}
.tab {
  padding: 6px 25px 5px;
  border-bottom: 6px solid transparent;
  color: inherit;
  text-decoration: none;
}
.tab.active {
  margin-right: 6px;
  color: #0696d7;
  border-color: #0696d7;
  font-weight: 600;
}
.groups {
  display: flex;
}
.group {
  display: flex;
  flex-direction: column;
  align-items: center;
  gap: 8px;
  height: 102px;
  margin-top: 7px;
  padding: 1px 21px 0;
  border-right: 2px solid #cbcbcb;
}
.group.wide {
  padding: 1px 28px 0;
}
.group:last-child {
  border: none;
}
.tools {
  display: flex;
  gap: 22px;
}
.group-name {
  display: flex;
  align-items: center;
  gap: 5px;
}
.tool.on {
  margin: -7px 0;
  background: #0696d7;
  border-radius: 2px;
}
.tool.on svg {
  width: 78px;
  height: 78px;
}

/* viewport */
.viewport {
  position: relative;
  flex: 1;
  min-height: 0;
  background: #fff;
}
.scene {
  position: absolute;
  inset: 0;
  width: 100%;
  height: 100%;
}
.scene path,
.scene circle {
  vector-effect: non-scaling-stroke;
}
.minor,
.major,
.edge,
.xaxis,
.yaxis,
.curve,
.picked,
.ghost {
  fill: none;
}
.minor {
  stroke: #e8e8e8;
}
.major {
  stroke: #c2c2c2;
}
.edge {
  stroke: #666;
}
.xaxis {
  stroke: #ff8f8f;
}
.yaxis {
  stroke: #80ff80;
}
.ticks {
  font-size: 18px;
  fill: #666;
}
.origin {
  fill: #aaa;
  stroke: #aaa;
}
.origin ellipse {
  fill: #eee;
  stroke-width: 3;
}
.profile {
  fill: #90d2f4;
  fill-opacity: 0.15;
}
.curve {
  stroke: #111;
  stroke-width: 2;
}
.picked {
  stroke: #6fc3ec;
  stroke-width: 2;
}
.ghost {
  stroke: #d7edf8;
}
.face {
  stroke: #a8a8a8;
}
.face-label {
  font-size: 20px;
  font-weight: 700;
  fill: #9a9ea3;
}
.face-label.back {
  font-size: 13px;
}
.face-label.small {
  font-size: 11px;
}
.axis {
  font-size: 31px;
  font-weight: 500;
}
.browser {
  position: absolute;
  top: 8px;
  left: 8px;
  width: 599px;
}
.panel {
  display: flex;
  align-items: center;
  height: 48px;
  padding: 0 21px 0 8px;
  background: #f1f1f1;
  border: solid #cbcbcb;
  border-width: 1px 2px 2px 1px;
}
.panel h2 {
  flex: 1;
  padding-left: 20px;
  font-size: 22px;
  color: #666;
}
.rewind {
  width: 20px;
  height: 12px;
}
.comments {
  position: absolute;
  bottom: 10px;
  left: 8px;
  width: 599px;
}
.tree-wrap {
  display: flex;
  padding: 12px 0 0 8px;
}
.scroll {
  width: 12px;
  height: 1333px;
  padding-top: 489px;
  background: #cacbcc;
}
.thumb {
  height: 444px;
  border: 1px solid #777;
  border-radius: 6px;
  background: #999;
}
.tree {
  display: flex;
  flex-direction: column;
  gap: 8px;
}
.node {
  display: flex;
  align-items: center;
  padding-left: 88px;
}
.node.parent {
  padding-left: 52px;
}
.twist {
  width: 16px;
  height: 22px;
  margin-right: 20px;
}
.label {
  display: flex;
  align-items: center;
  height: 40px;
  padding: 0 22px 0 6px;
  background: #f1f1f1;
  font-size: 23px;
}
.label .eye {
  width: 32px;
  height: 26px;
  margin-right: 18px;
}
.label .i32 {
  margin-right: 28px;
}
.navbar {
  position: absolute;
  left: 42%;
  bottom: 12px;
  display: flex;
  gap: 22px;
  height: 48px;
  padding: 0 6px;
  background: #f1f1f1;
}
.navbar .drop {
  gap: 11px;
  margin-right: -8px;
}
.navbar .tight {
  gap: 5px;
}
.navbar .drop:last-child {
  margin-right: 0;
}
.assistant {
  position: absolute;
  right: 26px;
  bottom: 12px;
}

/* timeline dock */
.dock {
  height: 100px;
  border-top: 4px solid #cbcbcb;
  box-shadow: inset 0 2px #e0e0e0;
}
.dock-thumb {
  width: 278px;
  height: 16px;
  margin-left: 8px;
  background: #cbcbcb;
  border-radius: 0 0 6px 6px;
}
.dock-row {
  display: flex;
  align-items: center;
  height: 68px;
  margin-top: 8px;
}
.playback {
  display: flex;
  gap: 20px;
  width: 284px;
  padding-left: 20px;
}
.timeline {
  align-self: flex-start;
  width: 2555px;
}
.steps {
  display: flex;
}
.step {
  display: flex;
  flex-direction: column;
  align-items: center;
  width: 48px;
}
.step button {
  padding: 8px;
  border-radius: 4px;
}
.step.current button {
  background: #e5e71f;
}
.step::after {
  content: "";
  width: 4px;
  height: 8px;
  background: #cbcbcb;
}
.rail {
  display: flex;
  gap: 4px;
  height: 4px;
  padding-left: 22px;
}
.rail i {
  width: 7px;
  background: #cbcbcb;
}
.rail i:first-child {
  flex: 1;
}
.settings {
  margin: 0 26px 0 auto;
}
```
FILE: script.js
```js
const icon = (id, cls) => `<svg class="${cls}"><use href="#${id}" /></svg>`;

// ribbon
const groups = [
  ["CREATE", ["sketch-new", "extrude", "revolve", "hole", "pattern", "form", "derive"]],
  ["MODIFY", ["press", "fillet", "shell", "combine", "split", "move"]],
  ["ASSEMBLE", ["insert-link", "component", "joint", "parts"]],
  ["CONFIGURE", ["config", "config-table"], "wide"],
  ["CONSTRUCT", ["plane"], "wide"],
  ["INSPECT", ["measure"], "wide"],
  ["INSERT", ["bolt", "image"]],
  ["SELECT", ["select"], "wide"],
];
document.getElementById("groups").innerHTML = groups
  .map(([name, tools, cls]) => `
    <div class="group ${cls || ""}">
      <div class="tools">
        ${tools.map((t) => `<button class="tool ${t === "select" ? "on" : ""}" aria-label="${t}">${icon(t, "i64")}</button>`).join("")}
      </div>
      <button class="group-name">${name}<i class="caret"></i></button>
    </div>`)
  .join("");

// browser tree
const locked = [1, 2, 3, 4, 6, 12, 13, 14, 16];
const visible = [11, 12];
const nodes = ["joint1.4", "joint1.5", "joint1.6", "arm 1", "arm 2", "arm 3"].map((name) => ({ name, type: "body" }));
nodes.push({ name: "buttons (18)", type: "folder", twist: "closed" });
nodes.push({ name: "Sketches", type: "folder", twist: "open", on: true });
for (let i = 1; i <= 20; i++) {
  nodes.push({ name: "Sketch" + i, type: locked.includes(i) ? "sk-lock" : "sk-edit", on: visible.includes(i) });
}
const twists = {
  none: "",
  closed: '<path d="M3 1v20l10-10z" fill="#fff" stroke="#111" stroke-width="1.5" />',
  open: '<path d="M1 18L14 4v14z" fill="#555" stroke="#000" stroke-width="2" />',
};
document.getElementById("tree").innerHTML = nodes
  .map((n) => `
    <li class="node ${n.twist === "open" ? "parent" : ""}">
      <svg class="twist" viewBox="0 0 16 22">${twists[n.twist || "none"]}</svg>
      <div class="label">
        <button class="bare" aria-label="Toggle ${n.name}">${icon(n.on ? "eye" : "eye-off", "eye")}</button>
        ${icon(n.type, "i32")}${n.name}
      </div>
    </li>`)
  .join("");

// timeline
const kinds = { s: "sk-edit", e: "extrude", f: "fillet", h: "hole", p: "split", l: "shell", c: "capture", m: "move", z: "scale", j: "rigid", b: "boundary" };
const current = 25;
document.getElementById("steps").innerHTML = [..."ssssefhseffsefsplseeecsemezmmmffsejmmmmmeseseesebsees"]
  .map((k, i) => `<li class="step ${i === current ? "current" : ""}"><button aria-label="${kinds[k]}">${icon(kinds[k], "i32")}</button></li>`)
  .join("");

// ground plane: u runs along the green axis, v along the red one
const pt = (u, v) => `${(1473 + 35.89 * u + 17.82 * v).toFixed(1)} ${(1099 + 5.63 * u - 11.32 * v).toFixed(1)}`;
const U = [-90, 46];
const V = [-49, 61];
const lines = { minor: "", major: "" };
for (let u = U[0]; u <= U[1]; u++) {
  lines[u % 5 ? "minor" : "major"] += `M${pt(u, V[0])}L${pt(u, V[1])}`;
}
for (let v = V[0]; v <= V[1]; v++) {
  lines[v % 5 ? "minor" : "major"] += `M${pt(U[0], v)}L${pt(U[1], v)}`;
}
const draw = (id, d) => document.getElementById(id).setAttribute("d", d);
draw("minor", lines.minor);
draw("major", lines.major);
draw("edge", `M${pt(U[0], V[0])}L${pt(U[1], V[0])}L${pt(U[1], V[1])}L${pt(U[0], V[1])}Z`);
draw("xaxis", `M${pt(0, V[0])}L${pt(0, V[1])}`);
draw("yaxis", `M${pt(U[0], 0)}L${pt(U[1], 0)}`);
```
